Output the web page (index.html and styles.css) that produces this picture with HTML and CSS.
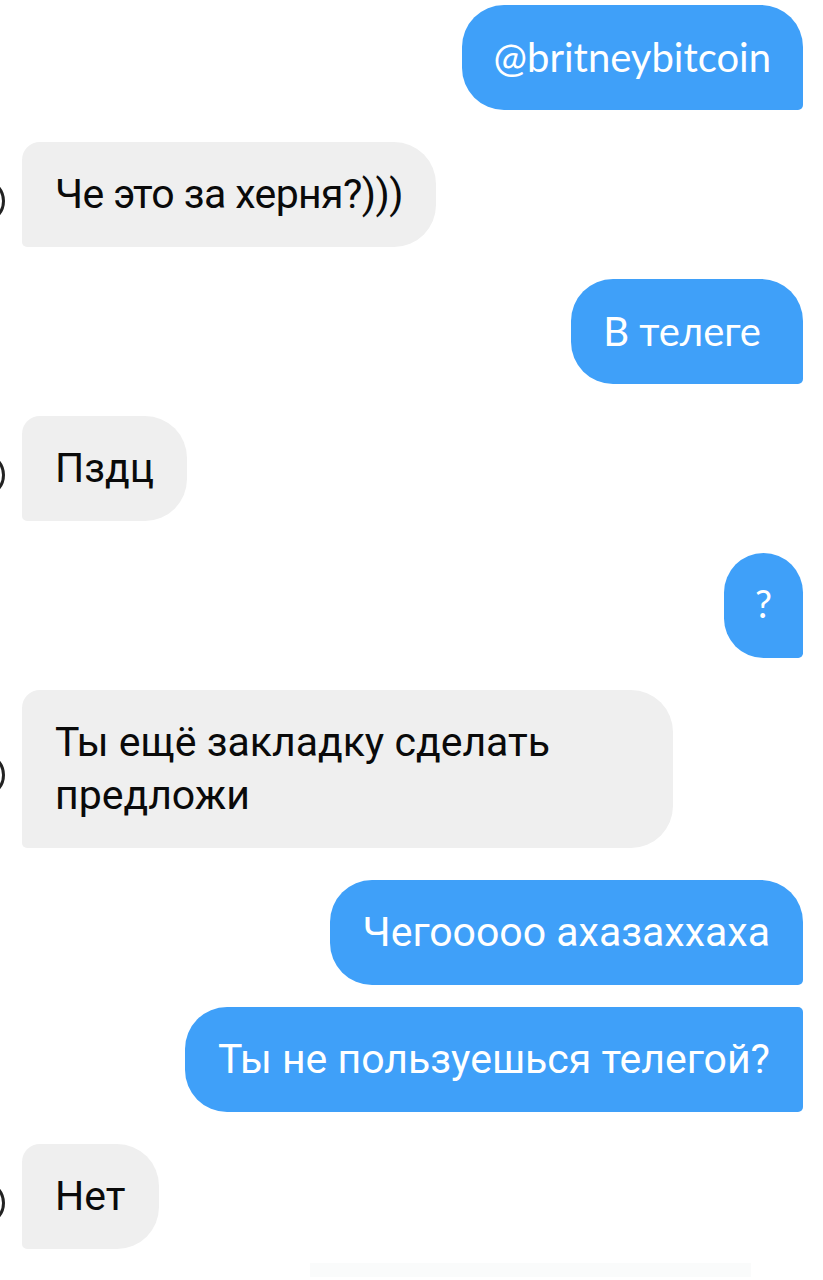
FILE: index.html
```html
<!DOCTYPE html>
<html lang="ru">

<head>
  <meta charset="UTF-8" />
  <title>Direct</title>
  <link rel="stylesheet" href="styles.css">
</head>

<body>
  <div class="chat">
    <div class="row sent">
      <div class="bubble alt">@britneybitcoin</div>
    </div>

    <div class="row received">
      <div class="avatar"></div>
      <div class="bubble tight">Че это за херня?)))</div>
    </div>

    <div class="row sent">
      <div class="bubble alt roomy">В телеге</div>
    </div>

    <div class="row received">
      <div class="avatar"></div>
      <div class="bubble">Пздц</div>
    </div>

    <div class="row sent">
      <div class="bubble alt small">?</div>
    </div>

    <div class="row received">
      <div class="avatar"></div>
      <div class="bubble wide">Ты ещё закладку сделать предложи</div>
    </div>

    <div class="row sent">
      <div class="bubble">Чегоoooo ахазаххаха</div>
    </div>

    <div class="row sent grouped">
      <div class="bubble">Ты не пользуешься телегой?</div>
    </div>

    <div class="row received">
      <div class="avatar"></div>
      <div class="bubble">Нет</div>
    </div>

    <div class="composer"></div>
  </div>
</body>

</html>
```

FILE: styles.css
```css
body {
  margin: 0;
  background-color: white;
  font-family: Roboto, "Liberation Sans", sans-serif;
  overflow: hidden;
}

.chat {
  display: flex;
  flex-direction: column;
  padding: 5px 20px 0 0;
}

.row {
  display: flex;
  align-items: center;
  margin-bottom: 32px;
}

.row.sent {
  justify-content: flex-end;
}

.row.grouped {
  margin-top: -10px;
}

.bubble {
  box-sizing: border-box;
  padding: 26px 33px;
  font-size: 41px;
  line-height: 53px;
  white-space: nowrap;
}

.bubble.tight {
  letter-spacing: -0.6px;
}

.bubble.wide {
  width: 651px;
  white-space: normal;
}

.received .bubble {
  background-color: #efefef;
  color: #0a0a0a;
  border-radius: 18px 42px 42px 5px;
}

.sent .bubble {
  background-color: #3fa0f9;
  color: white;
  border-radius: 42px 42px 5px 42px;
}

.sent.grouped .bubble {
  border-radius: 42px 5px 5px 42px;
}

.bubble.alt {
  font-family: Lato, "Noto Sans", sans-serif;
  font-size: 40px;
  padding: 26px 32px;
}

.bubble.roomy {
  padding-right: 42px;
}

.bubble.small {
  padding: 24px 31px 28px;
  font-size: 38px;
}

.avatar {
  width: 40px;
  height: 40px;
  margin: 12px 17px 0 -41px;
  border: 3px solid #222;
  border-radius: 50%;
}

.composer {
  height: 14px;
  margin: -18px 52px 0 310px;
  background-color: #fafbfb;
}
```
